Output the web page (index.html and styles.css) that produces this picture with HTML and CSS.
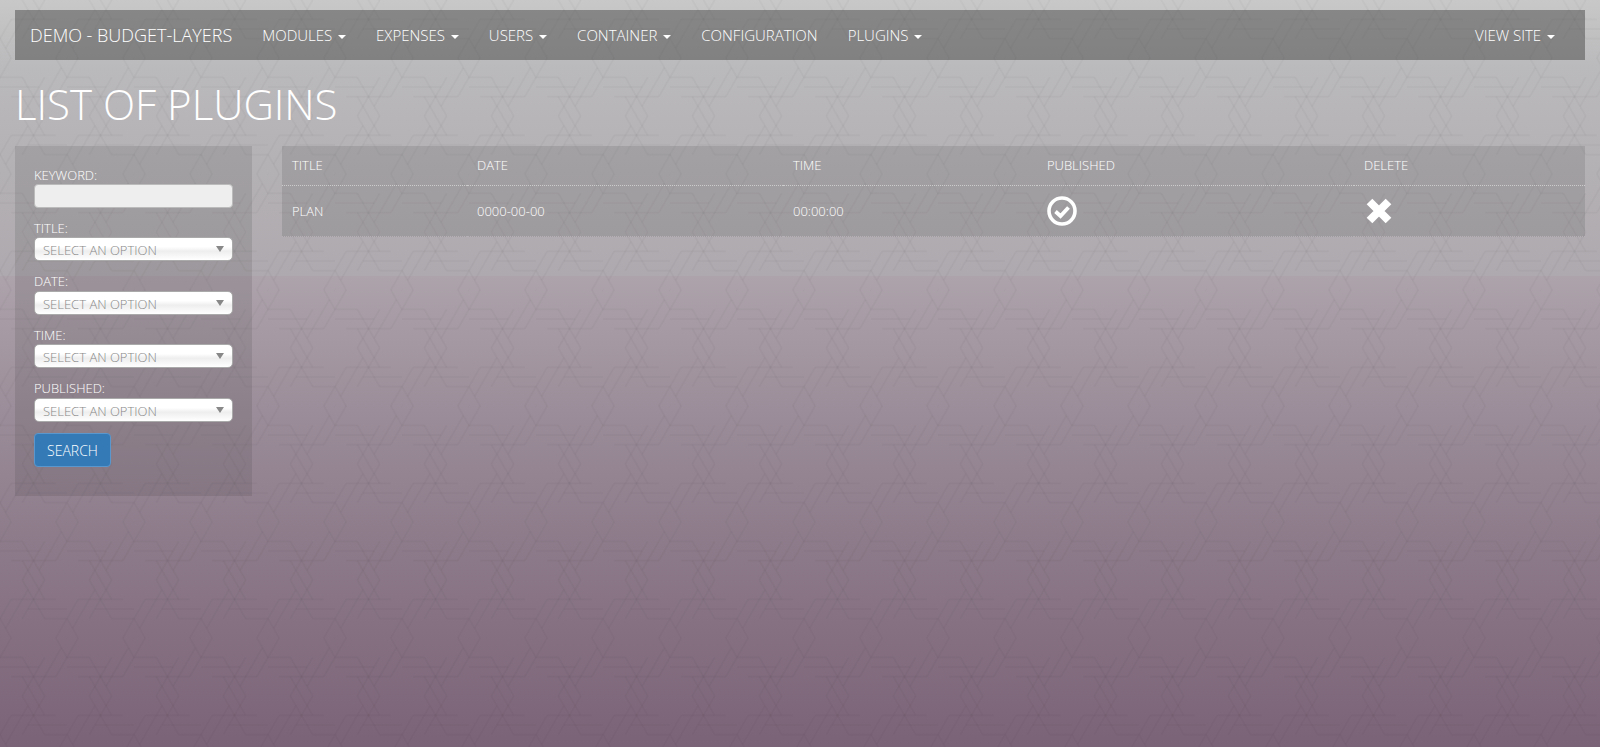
FILE: index.html
```html
<!DOCTYPE html>
<html lang="en">

<head>
    <meta charset="UTF-8">
    <meta name="viewport" content="width=device-width, initial-scale=1.0">
    <title>List of plugins</title>
    <link rel="stylesheet" href="styles.css">
</head>

<body>
    <nav class="navbar">
        <a class="brand">Demo - Budget-Layers</a>
        <ul class="nav-list">
            <li>Modules <span class="caret"></span></li>
            <li>Expenses <span class="caret"></span></li>
            <li>Users <span class="caret"></span></li>
            <li>Container <span class="caret"></span></li>
            <li>Configuration</li>
            <li>Plugins <span class="caret"></span></li>
        </ul>
        <ul class="nav-list">
            <li>View Site <span class="caret"></span></li>
        </ul>
    </nav>

    <h1>List of Plugins</h1>

    <div class="content">
        <form class="filters">
            <label>Keyword:</label>
            <input type="text" class="keyword">
            <label>Title:</label>
            <div class="select">Select an option<span class="arrow"></span></div>
            <label>Date:</label>
            <div class="select">Select an option<span class="arrow"></span></div>
            <label>Time:</label>
            <div class="select">Select an option<span class="arrow"></span></div>
            <label>Published:</label>
            <div class="select">Select an option<span class="arrow"></span></div>
            <button type="button" class="btn">Search</button>
        </form>

        <table class="list">
            <thead>
                <tr>
                    <th class="col-title">Title</th>
                    <th class="col-date">Date</th>
                    <th class="col-time">Time</th>
                    <th class="col-pub">Published</th>
                    <th>Delete</th>
                </tr>
            </thead>
            <tbody>
                <tr>
                    <td>Plan</td>
                    <td>0000-00-00</td>
                    <td>00:00:00</td>
                    <td>
                        <svg class="icon" width="30" height="30" viewBox="0 0 30 30">
                            <circle cx="15" cy="15" r="13" fill="none" stroke="#fff" stroke-width="3.6"/>
                            <path d="M8.500 15.500l5 4.500 8-8.500" fill="none" stroke="#fff" stroke-width="3.8"/>
                        </svg>
                    </td>
                    <td>
                        <svg class="icon" width="30" height="30" viewBox="0 0 30 30">
                            <path d="M5.500 5.500l19 19M24.500 5.500l-19 19" fill="none" stroke="#fff" stroke-width="8"/>
                        </svg>
                    </td>
                </tr>
            </tbody>
        </table>
    </div>
</body>

</html>
```

FILE: styles.css
```css
html {
    height: 100%;
}

body {
    margin: 0;
    min-height: 747px;
    box-sizing: border-box;
    padding: 10px 15px 0;
    font-family: "Open Sans", sans-serif;
    font-weight: 300;
    font-size: 13px;
    color: #fff;
    text-transform: uppercase;
    background-color: #9a8c99;
    background-image:
        url("data:image/svg+xml,%3Csvg xmlns='http://www.w3.org/2000/svg' xmlns:xlink='http://www.w3.org/1999/xlink' width='67' height='116' viewBox='0 0 67 116'%3E%3Cdefs%3E%3Cg id='s' fill='none' stroke='%23000' stroke-opacity='.028' stroke-width='1.600'%3E%3Cpath id='a' d='M22.330 0L44.660 38.680M33.500 0L44.660 19.340'/%3E%3Cuse xlink:href='%23a' transform='rotate(60)'/%3E%3Cuse xlink:href='%23a' transform='rotate(120)'/%3E%3Cuse xlink:href='%23a' transform='rotate(180)'/%3E%3Cuse xlink:href='%23a' transform='rotate(240)'/%3E%3Cuse xlink:href='%23a' transform='rotate(300)'/%3E%3C/g%3E%3C/defs%3E%3Cuse xlink:href='%23s' x='0' y='0'/%3E%3Cuse xlink:href='%23s' x='67' y='0'/%3E%3Cuse xlink:href='%23s' x='0' y='116'/%3E%3Cuse xlink:href='%23s' x='67' y='116'/%3E%3Cuse xlink:href='%23s' x='33.500' y='58'/%3E%3C/svg%3E"),
        linear-gradient(#c8c8c8, #bab9bb 9%, #aea9ae 36.900%, #ada3ab 37%, #9b8d99 55%, #8b7888 75%, #7b6377);
}

/* navbar */
.navbar {
    display: flex;
    align-items: center;
    height: 50px;
    padding-left: 15px;
    background-color: rgba(60, 60, 60, 0.46);
}

.brand {
    font-size: 18px;
    margin-right: 15px;
}

.nav-list {
    display: flex;
    list-style: none;
    margin: 0;
    padding: 0;
    font-size: 15px;
}

.nav-list li {
    padding: 0 15px;
}

.nav-list:last-child {
    margin-left: auto;
    margin-right: 15px;
}

.caret {
    display: inline-block;
    vertical-align: middle;
    margin-left: 2px;
    border-top: 4px solid #fff;
    border-left: 4px solid transparent;
    border-right: 4px solid transparent;
}

h1 {
    margin: 19px 0 17px;
    font-size: 42px;
    font-weight: 300;
    line-height: 50px;
}

/* layout */
.content {
    display: flex;
    gap: 30px;
    align-items: flex-start;
}

/* filters */
.filters {
    display: flex;
    flex-direction: column;
    flex: 0 0 237px;
    height: 350px;
    box-sizing: border-box;
    padding: 19.600px 19px 0;
    background-color: rgba(60, 60, 60, 0.15);
}

label {
    line-height: 18px;
    margin-bottom: 0.400px;
    font-size: 13px;
}

.keyword {
    height: 24px;
    box-sizing: border-box;
    margin: 0 0 11px;
    padding: 0;
    border: 1px solid #bbb;
    border-radius: 4px;
    background-color: #eee;
}

.select {
    position: relative;
    height: 24px;
    box-sizing: border-box;
    margin-bottom: 11px;
    padding-left: 8px;
    border: 1px solid #aaa;
    border-radius: 5px;
    line-height: 24px;
    font-size: 13px;
    color: #888;
    background: linear-gradient(#fff 40%, #eee 60%, #fff);
}

.arrow {
    position: absolute;
    top: 8px;
    right: 8px;
    border-top: 6px solid #888;
    border-left: 4px solid transparent;
    border-right: 4px solid transparent;
}

.btn {
    align-self: flex-start;
    width: 77px;
    height: 34px;
    padding: 1px 0 0;
    border: 1px solid #5a97cc;
    border-radius: 4px;
    font: inherit;
    font-size: 14px;
    color: #fff;
    text-transform: uppercase;
    background-color: #337ab7;
}

/* table */
.list {
    flex: 1;
    border-collapse: collapse;
    background-color: rgba(60, 60, 60, 0.15);
}

.list th,
.list td {
    padding: 0 10px;
    text-align: left;
    font-size: 13px;
    font-weight: 300;
}

.list th {
    height: 37px;
    padding-bottom: 2px;
    border-bottom: 1px dotted #ccc;
}

.list td {
    height: 50px;
    border-bottom: 1px dotted #b5b0b5;
}

.col-title {
    width: 165px;
}

.col-date {
    width: 296px;
}

.col-time {
    width: 234px;
}

.col-pub {
    width: 297px;
}

.icon {
    display: block;
}
```
